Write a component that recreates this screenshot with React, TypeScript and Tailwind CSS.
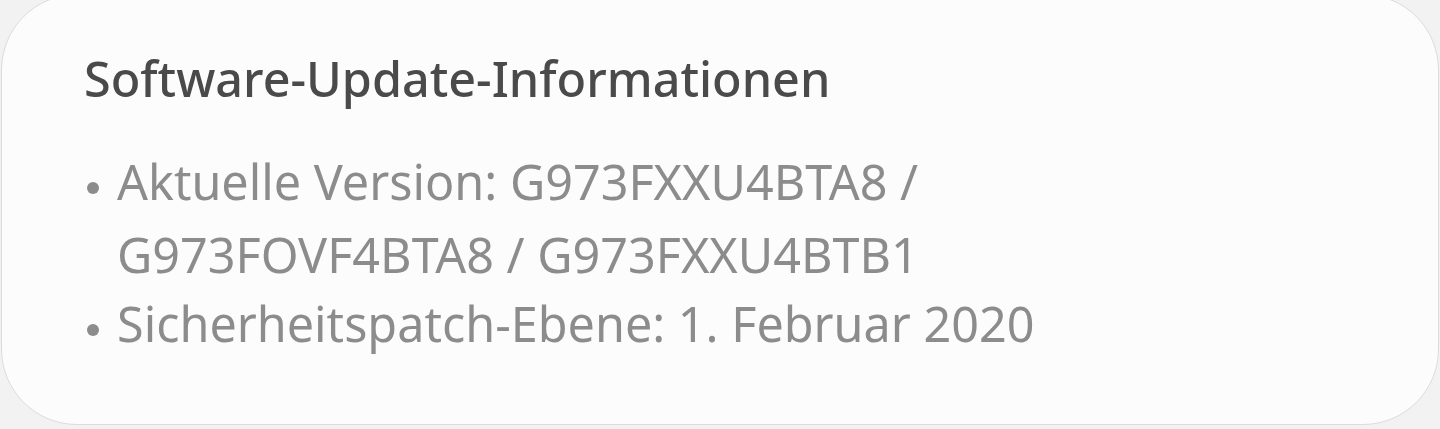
export default function App() {
  const items = [
    ['Aktuelle Version: G973FXXU4BTA8 /', 'G973FOVF4BTA8 / G973FXXU4BTB1'],
    ['Sicherheitspatch-Ebene: 1. Februar 2020'],
  ]

  return (
    <div className="h-[429px] w-[1440px] overflow-hidden bg-[#f2f2f2] font-['Noto_Sans',sans-serif]">
      <div className="mx-px -mt-[6px] h-[431px] rounded-[76px] border border-[#dcdcdc] bg-[#fcfcfc] pl-[82px] pt-[53px]">
        <h2 className="text-[48.5px] font-medium leading-[60px] text-[#4a4a4a]">
          Software-Update-Informationen
        </h2>
        <ul className="mt-[37px] text-[48.5px] leading-[73px] text-[#8c8c8c]">
          {items.map((lines, i) => (
            <li key={i} className={i > 0 ? 'flex -mt-[4px]' : 'flex'}>
              <span className="w-[33px] shrink-0 pl-[3px] pt-[37px]">
                <span className="block h-[12px] w-[12px] rounded-full bg-[#8c8c8c]" />
              </span>
              <span className="flex flex-col">
                {lines.map((l) => (
                  <span key={l}>{l}</span>
                ))}
              </span>
            </li>
          ))}
        </ul>
      </div>
    </div>
  )
}
